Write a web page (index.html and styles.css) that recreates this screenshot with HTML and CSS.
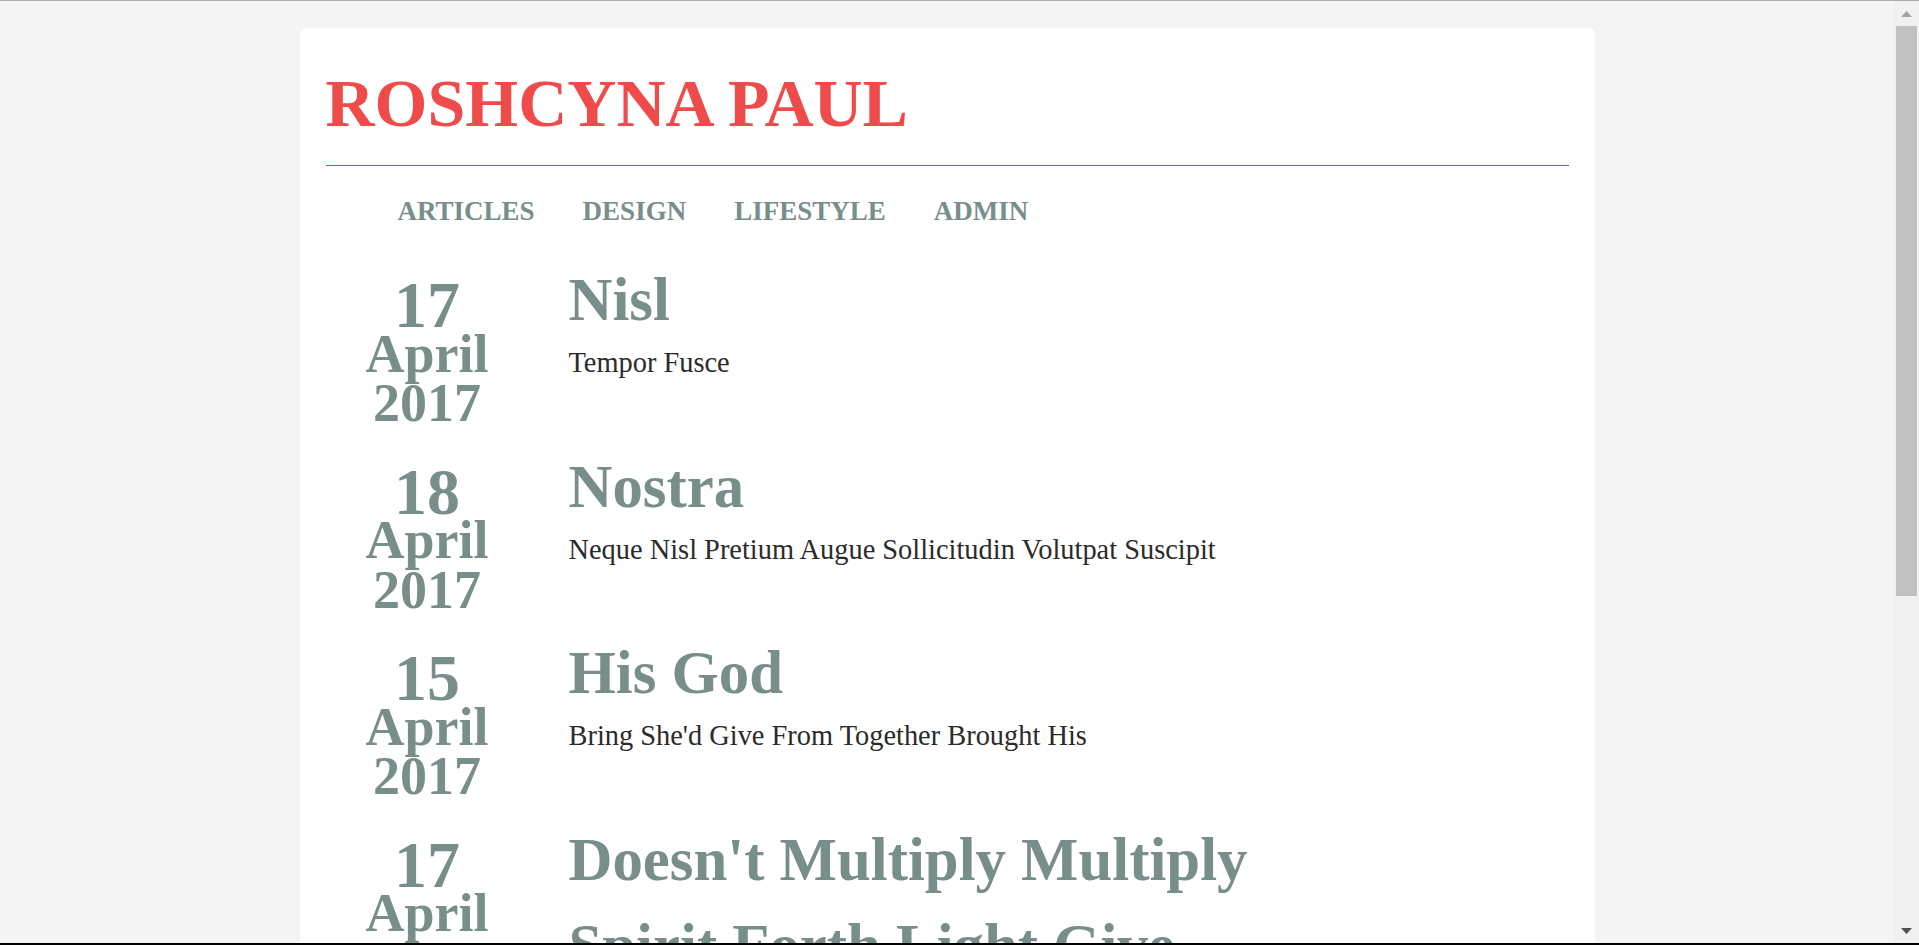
FILE: index.html
```html
<!DOCTYPE html>
<html lang="en">
<head>
<meta charset="utf-8">
<title>Roshcyna Paul</title>
<link rel="stylesheet" href="styles.css">
</head>
<body>
<div class="screen">
  <div class="screen-body">
    <div class="viewport">
      <div class="card">
        <header class="masthead">
          <h1 class="brand">ROSHCYNA PAUL</h1>
        </header>
        <nav class="menu">
          <a class="menu-link" href="#">ARTICLES</a>
          <a class="menu-link" href="#">DESIGN</a>
          <a class="menu-link" href="#">LIFESTYLE</a>
          <a class="menu-link" href="#">ADMIN</a>
        </nav>
        <ul class="posts">
          <li class="post">
            <div class="post-date"><span class="day">17</span><span class="month">April</span><span class="year">2017</span></div>
            <div class="post-body">
              <h2 class="post-title">Nisl</h2>
              <p class="post-excerpt">Tempor Fusce</p>
            </div>
          </li>
          <li class="post">
            <div class="post-date"><span class="day">18</span><span class="month">April</span><span class="year">2017</span></div>
            <div class="post-body">
              <h2 class="post-title">Nostra</h2>
              <p class="post-excerpt">Neque Nisl Pretium Augue Sollicitudin Volutpat Suscipit</p>
            </div>
          </li>
          <li class="post">
            <div class="post-date"><span class="day">15</span><span class="month">April</span><span class="year">2017</span></div>
            <div class="post-body">
              <h2 class="post-title">His God</h2>
              <p class="post-excerpt">Bring She'd Give From Together Brought His</p>
            </div>
          </li>
          <li class="post">
            <div class="post-date"><span class="day">17</span><span class="month">April</span><span class="year">2017</span></div>
            <div class="post-body">
              <h2 class="post-title">Doesn't Multiply Multiply Spirit Forth Light Give</h2>
              <p class="post-excerpt">Seasons Fruitful Dominion Deep Lesser</p>
            </div>
          </li>
        </ul>
      </div>
    </div>
    <div class="scrollbar">
      <div class="sb-button">
        <svg class="sb-arrow" width="11" height="6" viewBox="0 0 11 6"><polygon points="0,6 5.5,0 11,6" fill="#a3a3a3"/></svg>
      </div>
      <div class="sb-thumb"></div>
      <div class="sb-track"></div>
      <div class="sb-button">
        <svg class="sb-arrow" width="11" height="6" viewBox="0 0 11 6"><polygon points="0,0 11,0 5.5,6" fill="#505050"/></svg>
      </div>
    </div>
  </div>
</div>
</body>
</html>
```
FILE: styles.css
```css
html, body {
  margin: 0;
  padding: 0;
  height: 100%;
  overflow: hidden;
}

body {
  font-family: "Liberation Serif", "Times New Roman", serif;
  background: #f4f4f4;
}

.screen {
  height: 945px;
  box-sizing: border-box;
  border-top: 1px solid #ababab;
  border-bottom: 2px solid #000;
  display: flex;
  flex-direction: column;
}

.screen-body {
  flex: 1;
  min-height: 0;
  display: flex;
}

.viewport {
  flex: 1;
  overflow: hidden;
  padding-top: 27px;
}

.card {
  width: 1295px;
  margin: 0 auto;
  box-sizing: border-box;
  padding: 0 26px 60px;
  background: #fff;
  border-radius: 6px 6px 0 0;
}

.masthead {
  padding: 42px 0 28px;
  border-bottom: 1px solid #1b8f9c;
}

.brand {
  margin: 0;
  font-size: 68px;
  line-height: 67px;
  font-weight: 700;
  color: #ef4b4b;
}

.menu {
  display: flex;
  gap: 48px;
  padding-left: 72px;
  margin-top: 32px;
}

.menu-link {
  font-size: 27px;
  line-height: 27px;
  font-weight: 700;
  color: #788e8b;
  text-decoration: none;
}

.posts {
  list-style: none;
  margin: 32px 0 0;
  padding: 0;
}

.post {
  display: flex;
  align-items: flex-start;
  gap: 40px;
  margin-bottom: 15px;
}

.post-date {
  width: 203px;
  flex: none;
  margin-top: 23px;
  text-align: center;
  font-weight: 700;
  color: #788e8b;
  line-height: 49.5px;
}

.post-date span {
  display: block;
}

.day {
  font-size: 66px;
}

.month,
.year {
  font-size: 54px;
}

.post-body {
  width: 760px;
}

.post-title {
  margin: 0;
  font-size: 60.8px;
  line-height: 86px;
  font-weight: 700;
  color: #788e8b;
}

.post-excerpt {
  margin: 3px 0 0;
  font-size: 28.4px;
  line-height: 34px;
  color: #2b2b2b;
}

.scrollbar {
  width: 25px;
  flex: none;
  background: #f1f1f1;
  display: flex;
  flex-direction: column;
  align-items: center;
}

.sb-button {
  height: 25px;
  width: 100%;
  display: flex;
  align-items: center;
  justify-content: center;
}

.sb-arrow {
  display: block;
}

.sb-thumb {
  width: 21px;
  height: 570px;
  background: #c1c1c1;
}

.sb-track {
  flex: 1;
}
```
